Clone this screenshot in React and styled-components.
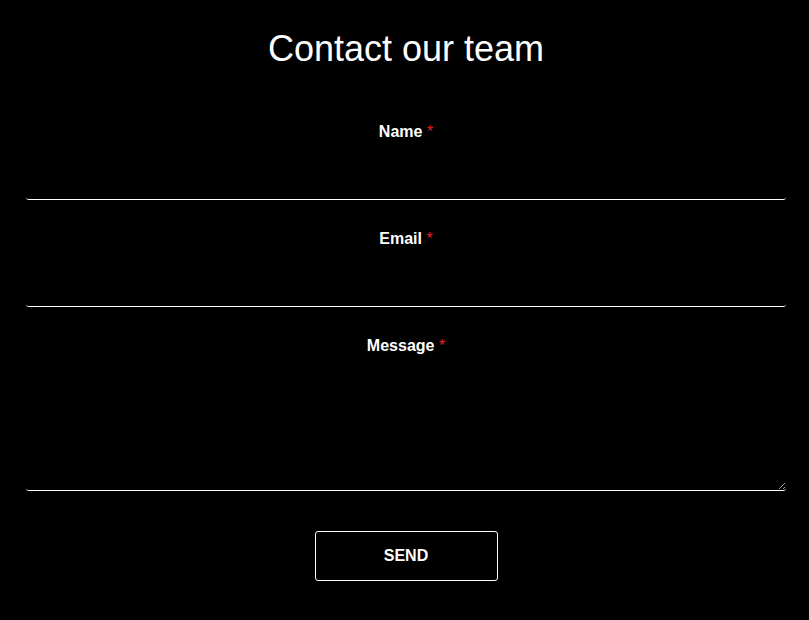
import React from 'react'
import styled, { createGlobalStyle } from 'styled-components'

const GlobalStyle = createGlobalStyle`
  body {
    margin: 0;
    background: #000;
    color: #fff;
    font-family: "Liberation Sans", Arial, sans-serif;
  }
`

const Page = styled.div`
  padding: 28px 23px 40px 26px;
`

const Title = styled.h1`
  margin: 0 0 52px;
  font-size: 36px;
  font-weight: 400;
  text-align: center;
`

const Form = styled.form`
  display: flex;
  flex-direction: column;
  gap: 29px;
`

const Field = styled.div`
  display: flex;
  flex-direction: column;
`

const Label = styled.label`
  display: block;
  font-size: 16px;
  font-weight: 700;
  line-height: 20px;
  text-align: center;
`

const Star = styled.span`
  color: #e02424;
  font-weight: 400;
`

const Input = styled.input`
  box-sizing: border-box;
  width: 100%;
  height: 58px;
  padding: 0 8px;
  background: transparent;
  color: #fff;
  border: none;
  border-bottom: 1px solid #fff;
  border-radius: 3px;
  font: 15px "Liberation Sans", Arial, sans-serif;
  outline: none;
`

const TextArea = styled.textarea`
  box-sizing: border-box;
  width: 100%;
  height: 135px;
  padding: 8px;
  background: transparent;
  color: #fff;
  border: none;
  border-bottom: 1px solid #fff;
  border-radius: 3px;
  font: 15px "Liberation Sans", Arial, sans-serif;
  resize: vertical;
  outline: none;
  display: block;
`

const Actions = styled.div`
  display: flex;
  justify-content: center;
  margin-top: 11px;
`

const SendButton = styled.button`
  width: 183px;
  height: 50px;
  background: #000;
  color: #fff;
  border: 1px solid #fff;
  border-radius: 3px;
  font: 700 16px "Liberation Sans", Arial, sans-serif;
  cursor: pointer;
`

const fields = [
  { id: 'name', label: 'Name', type: 'text' },
  { id: 'email', label: 'Email', type: 'email' },
]

export default function App() {
  return (
    <>
      <GlobalStyle />
      <Page>
        <Title>Contact our team</Title>
        <Form onSubmit={e => e.preventDefault()}>
          {fields.map(f => (
            <Field key={f.id}>
              <Label htmlFor={f.id}>{f.label} <Star>*</Star></Label>
              <Input id={f.id} type={f.type} />
            </Field>
          ))}
          <Field>
            <Label htmlFor="message">Message <Star>*</Star></Label>
            <TextArea id="message" />
          </Field>
          <Actions>
            <SendButton type="submit">SEND</SendButton>
          </Actions>
        </Form>
      </Page>
    </>
  )
}
